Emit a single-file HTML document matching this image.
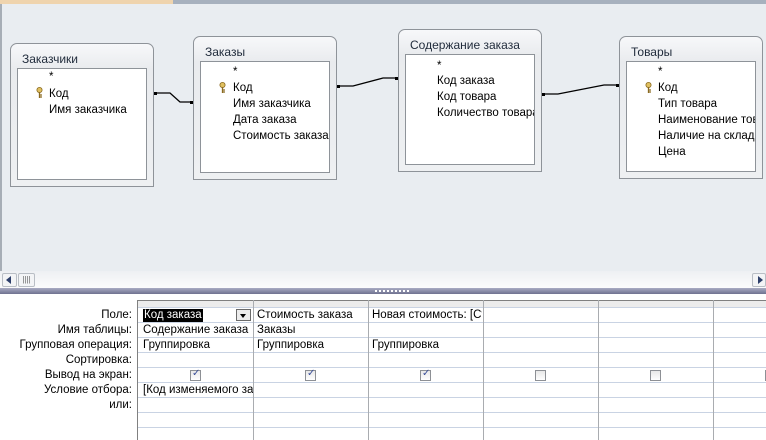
<!DOCTYPE html>
<html><head><meta charset="utf-8"><style>
*{margin:0;padding:0;box-sizing:border-box}
body{width:766px;height:440px;overflow:hidden;position:relative;background:#fff;font-family:"Liberation Sans","DejaVu Sans",sans-serif;font-size:11.5px;color:#000}
.a{position:absolute}
.tb{position:absolute;border:1px solid #8e9399;border-radius:7px 7px 0 0;background:linear-gradient(#f7f8fa,#e9ebee 25px,#eef0f2);}
.tb .t{position:absolute;left:11px;top:8px;color:#1f2a3a;font-size:12px}
.tb .in{position:absolute;left:6px;right:6px;top:24px;bottom:6px;background:#fff;border:1px solid #8e9399;overflow:hidden}
.in div{position:absolute;white-space:nowrap;font-size:11.5px}
.key{position:absolute;width:7px;height:11px}
.lbl{position:absolute;right:634px;white-space:nowrap;text-align:right}
.hl{position:absolute;left:138px;right:0;height:1px;background:#c9d3e3}
.vl{position:absolute;top:300px;bottom:0;width:1px;background:#a9acb0}
.c{position:absolute;white-space:nowrap}
.cb{position:absolute;width:11px;height:11px;border:1px solid #8d9095;background:linear-gradient(#e8e8e8,#fff)}
.cb.k::after{content:"✓";position:absolute;left:1px;top:-3px;font-size:10px;color:#3a4f9a}
</style></head><body>
<div class="a" style="left:0;top:0;width:766px;height:288px;background:#e9edf1"></div>
<div class="a" style="left:0;top:0;width:173px;height:4px;background:#efd4ae"></div>
<div class="a" style="left:173px;top:0;width:593px;height:4px;background:#a7b1be"></div>
<div class="a" style="left:0;top:4px;width:2px;height:284px;background:#a7aeb6"></div>

<div class="tb" style="left:10px;top:43px;width:144px;height:144px"><div class="t">Заказчики</div>
<div class="in"><div style="left:31px;top:2px">*</div>
<svg class="key" style="left:18px;top:18px" viewBox="0 0 7 11"><circle cx="3.5" cy="3" r="2.6" fill="#e0c060" stroke="#8a6a20" stroke-width=".8"/><path d="M3.5 5v6M3.5 8h2.5M3.5 10h2.5" stroke="#8a6a20" stroke-width="1.3"/></svg>
<div style="left:31px;top:19px">Код</div><div style="left:31px;top:35px">Имя заказчика</div></div></div>

<div class="tb" style="left:193px;top:36px;width:144px;height:144px"><div class="t">Заказы</div>
<div class="in"><div style="left:32px;top:4px">*</div>
<svg class="key" style="left:18px;top:20px" viewBox="0 0 7 11"><circle cx="3.5" cy="3" r="2.6" fill="#e0c060" stroke="#8a6a20" stroke-width=".8"/><path d="M3.5 5v6M3.5 8h2.5M3.5 10h2.5" stroke="#8a6a20" stroke-width="1.3"/></svg>
<div style="left:32px;top:20px">Код</div><div style="left:32px;top:36px">Имя заказчика</div><div style="left:32px;top:52px">Дата заказа</div><div style="left:32px;top:68px">Стоимость заказа</div></div></div>

<div class="tb" style="left:398px;top:29px;width:144px;height:143px"><div class="t">Содержание заказа</div>
<div class="in"><div style="left:31px;top:5px">*</div>
<div style="left:31px;top:20px">Код заказа</div><div style="left:31px;top:36px">Код товара</div><div style="left:31px;top:52px">Количество товара</div></div></div>

<div class="tb" style="left:619px;top:36px;width:144px;height:143px"><div class="t">Товары</div>
<div class="in"><div style="left:31px;top:4px">*</div>
<svg class="key" style="left:18px;top:20px" viewBox="0 0 7 11"><circle cx="3.5" cy="3" r="2.6" fill="#e0c060" stroke="#8a6a20" stroke-width=".8"/><path d="M3.5 5v6M3.5 8h2.5M3.5 10h2.5" stroke="#8a6a20" stroke-width="1.3"/></svg>
<div style="left:31px;top:20px">Код</div><div style="left:31px;top:36px">Тип товара</div><div style="left:31px;top:52px">Наименование товара</div><div style="left:31px;top:68px">Наличие на складе</div><div style="left:31px;top:84px">Цена</div></div></div>

<svg class="a" style="left:0;top:0" width="766" height="288">
<g stroke="#000" stroke-width="1.3" fill="none">
<path d="M155 93H170L180 102H192"/><path d="M338 86H353L383 78H397"/><path d="M543 94H558L604 85H618"/></g>
<g fill="#000"><rect x="154" y="92" width="3" height="3"/><rect x="190" y="101" width="3" height="3"/><rect x="337" y="85" width="3" height="3"/><rect x="395" y="77" width="3" height="3"/><rect x="542" y="93" width="3" height="3"/><rect x="616" y="84" width="3" height="3"/></g>
</svg>

<div class="a" style="left:0;top:271px;width:766px;height:17px;background:linear-gradient(#eef0f3,#fbfbfc)"></div>
<div class="a" style="left:2px;top:273px;width:15px;height:14px;border:1px solid #b9bec5;border-radius:2px;background:#f3f4f6"></div>
<div class="a" style="left:6px;top:276px;width:0;height:0;border-top:4px solid transparent;border-bottom:4px solid transparent;border-right:5px solid #2c3e6a"></div>
<div class="a" style="left:18px;top:273px;width:17px;height:14px;border:1px solid #b9bec5;border-radius:2px;background:#f3f4f6;font-size:8px;color:#666;text-align:center;line-height:12px">||||</div>
<div class="a" style="left:752px;top:273px;width:14px;height:14px;border:1px solid #b9bec5;border-radius:2px;background:#f3f4f6"></div>
<div class="a" style="left:758px;top:276px;width:0;height:0;border-top:4px solid transparent;border-bottom:4px solid transparent;border-left:5px solid #2c3e6a"></div>
<div class="a" style="left:0;top:288px;width:766px;height:6px;background:linear-gradient(#a9abc3,#6f7290)"></div>
<div class="a" style="left:375px;top:290px;width:35px;height:2px;background:repeating-linear-gradient(90deg,#fff 0 2px,transparent 2px 4px)"></div>

<div class="a" style="left:0;top:294px;width:138px;height:146px;background:#fff"></div>
<div class="a" style="left:137px;top:300px;width:629px;height:1px;background:#808080"></div>
<div class="a" style="left:138px;top:301px;width:628px;height:6px;background:#ececec"></div>
<div class="a" style="left:137px;top:300px;width:1px;height:140px;background:#808080"></div>
<div class="hl" style="top:307px"></div><div class="hl" style="top:322px"></div><div class="hl" style="top:337px"></div><div class="hl" style="top:352px"></div><div class="hl" style="top:367px"></div><div class="hl" style="top:382px"></div><div class="hl" style="top:397px"></div><div class="hl" style="top:412px"></div><div class="hl" style="top:427px"></div>
<div class="vl" style="left:253px"></div><div class="vl" style="left:368px"></div><div class="vl" style="left:483px"></div><div class="vl" style="left:598px"></div><div class="vl" style="left:713px"></div>

<div class="lbl" style="top:309px">Поле:</div>
<div class="lbl" style="top:324px">Имя таблицы:</div>
<div class="lbl" style="top:339px">Групповая операция:</div>
<div class="lbl" style="top:354px">Сортировка:</div>
<div class="lbl" style="top:369px">Вывод на экран:</div>
<div class="lbl" style="top:384px">Условие отбора:</div>
<div class="lbl" style="top:399px">или:</div>

<div class="c" style="left:143px;top:309px;background:#000;color:#fff;padding:0 1px;line-height:13px">Код заказа</div>
<div class="a" style="left:236px;top:309px;width:15px;height:12px;border:1px solid #6a6a6a;background:#ececec"></div>
<div class="a" style="left:240px;top:314px;width:0;height:0;border-left:3.5px solid transparent;border-right:3.5px solid transparent;border-top:4px solid #000"></div>
<div class="c" style="left:257px;top:309px">Стоимость заказа</div>
<div class="c" style="left:372px;top:309px;width:110px;overflow:hidden">Новая стоимость: [Стоимость]</div>
<div class="c" style="left:143px;top:324px">Содержание заказа</div>
<div class="c" style="left:257px;top:324px">Заказы</div>
<div class="c" style="left:143px;top:339px">Группировка</div>
<div class="c" style="left:257px;top:339px">Группировка</div>
<div class="c" style="left:372px;top:339px">Группировка</div>
<div class="cb k" style="left:190px;top:370px"></div><div class="cb k" style="left:305px;top:370px"></div><div class="cb k" style="left:420px;top:370px"></div><div class="cb" style="left:535px;top:370px"></div><div class="cb" style="left:650px;top:370px"></div><div class="cb" style="left:765px;top:370px"></div>
<div class="c" style="left:143px;top:384px;width:110px;overflow:hidden">[Код изменяемого заказа]</div>
</body></html>
